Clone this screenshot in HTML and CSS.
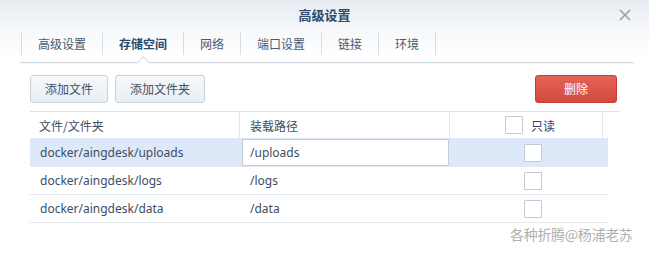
FILE: index.html
```html
<!DOCTYPE html>
<html lang="zh">
<head>
<meta charset="utf-8">
<link rel="stylesheet" href="styles.css">
</head>
<body>
<div class="window">
  <div class="titlebar">
    <div></div>
    <div class="title">高级设置</div>
    <div class="close-wrap">
      <svg class="close" width="12" height="12" viewBox="0 0 12 12"><path d="M1 1 L11 11 M11 1 L1 11" stroke="#9aa1a9" stroke-width="1.6" fill="none"/></svg>
    </div>
  </div>
  <div class="tabbar">
    <div class="tabs">
      <div class="tab">高级设置</div>
      <div class="tab active">存储空间</div>
      <div class="tab">网络</div>
      <div class="tab">端口设置</div>
      <div class="tab">链接</div>
      <div class="tab">环境</div>
    </div>
  </div>
  <div class="toolbar">
    <div class="btn">添加文件</div>
    <div class="btn">添加文件夹</div>
    <div class="spacer"></div>
    <div class="btn danger">删除</div>
  </div>
  <div class="grid">
    <div class="ghead">
      <div class="hcell c1">文件/文件夹</div>
      <div class="hcell c2">装载路径</div>
      <div class="hcell c3"><span class="cb"></span><span class="ro">只读</span></div>
      <div class="hcell c4"></div>
    </div>
    <div class="row selected">
      <div class="cell c1">docker/aingdesk/uploads</div>
      <div class="cell c2 edit"><div class="input">/uploads</div></div>
      <div class="cell c3b"><span class="cb"></span></div>
    </div>
    <div class="row">
      <div class="cell c1">docker/aingdesk/logs</div>
      <div class="cell c2">/logs</div>
      <div class="cell c3b"><span class="cb"></span></div>
    </div>
    <div class="row">
      <div class="cell c1">docker/aingdesk/data</div>
      <div class="cell c2">/data</div>
      <div class="cell c3b"><span class="cb"></span></div>
    </div>
  </div>
  <div class="watermark">各种折腾@杨浦老苏</div>
</div>
</body>
</html>
```
FILE: styles.css
```css
html, body {
  margin: 0;
  padding: 0;
  background: #fff;
}
body {
  width: 649px;
  height: 259px;
  overflow: hidden;
  font-family: "Noto Sans", "Noto Sans CJK SC", sans-serif;
  font-size: 12px;
  color: #3d4e63;
}
.window {
  position: relative;
  width: 649px;
  height: 259px;
  background: linear-gradient(#e8ecf1 0px, #f6f8fa 30px, #ffffff 56px);
}
.titlebar {
  height: 30px;
  display: grid;
  grid-template-columns: 1fr auto 1fr;
  align-items: center;
}
.title {
  font-family: "Noto Sans CJK SC", sans-serif;
  font-weight: bold;
  font-size: 13px;
  color: #2b4a6f;
  line-height: 30px;
}
.close-wrap {
  display: flex;
  justify-content: flex-end;
  padding-right: 18px;
}
.close { display: block; }
.tabbar {
  margin: 2px 15px 0 20px;
  padding-bottom: 7px;
  border-bottom: 1px solid #d3d9df;
  box-shadow: 0 1px 1px rgba(0,0,0,0.04);
}
.tabs {
  display: flex;
  margin-left: 1px;
}
.tab {
  font-family: "Noto Sans CJK SC", sans-serif;
  height: 23px;
  line-height: 23px;
  padding: 0 16px 0 16px;
  border-left: 1px solid #d6dde5;
  color: #4a5a6d;
  position: relative;
}
.tab:last-child {
  border-right: 1px solid #d6dde5;
}
.tab.active {
  font-weight: bold;
  color: #2b4a6f;
}
.tab.active::after {
  content: "";
  position: absolute;
  left: 50%;
  bottom: -12px;
  width: 8px;
  height: 8px;
  margin-left: -4px;
  background: #fff;
  border-left: 1px solid #d3d9df;
  border-top: 1px solid #d3d9df;
  transform: rotate(45deg);
}
.toolbar {
  display: flex;
  gap: 7px;
  margin: 12px 32px 0 30px;
  height: 28px;
}
.spacer { flex: 1; }
.btn {
  box-sizing: border-box;
  height: 28px;
  line-height: 26px;
  padding: 0 14px;
  border: 1px solid #c9d1db;
  border-radius: 3px;
  background: linear-gradient(#f6f8fa, #e9eef3);
  color: #3f5064;
  font-family: "Noto Sans CJK SC", sans-serif;
}
.btn:nth-child(2) { padding: 0 14px; }
.btn.danger {
  width: 82px;
  text-align: center;
  padding: 0;
  background: linear-gradient(#e46455, #d34a3e);
  border-color: #c53d34;
  color: #fff;
}
.grid {
  margin: 8px 0 0 30px;
  width: 590px;
}
.ghead {
  display: grid;
  grid-template-columns: 210px 210px 153px 17px;
  border-top: 1px solid #dde3ea;
  height: 26px;
}
.hcell {
  display: flex;
  align-items: center;
  padding-left: 9px;
  border-right: 1px solid #e1e7ee;
  font-family: "Noto Sans CJK SC", sans-serif;
  color: #3d4e63;
}
.hcell.c2 { padding-left: 10px; }
.hcell.c3 { padding-left: 55px; }
.hcell.c4 { border-right: none; }
.ro {
  margin-left: 8px;
  color: #2b4a6f;
}
.row {
  display: grid;
  grid-template-columns: 210px 210px 158px;
  width: 578px;
  height: 27px;
  border-top: 1px solid #e4e9ef;
}
.row:last-child { border-bottom: 1px solid #e4e9ef; }
.row.selected {
  background: #dde9f9;
  border-top-color: #dde9f9;
}
.cell {
  display: flex;
  align-items: center;
  padding-left: 10px;
  color: #3d4e63;
}
.cell.edit {
  padding-left: 2px;
}
.input {
  box-sizing: border-box;
  width: 207px;
  height: 27px;
  line-height: 25px;
  border: 1px solid #c4ccd6;
  background: #fff;
  padding-left: 7px;
}
.cell.c3b {
  padding-left: 74px;
}
.cb {
  display: inline-block;
  box-sizing: border-box;
  width: 18px;
  height: 18px;
  border: 1px solid #c3cad4;
  background: #fff;
  border-radius: 1px;
}
.watermark {
  position: absolute;
  left: 510px;
  top: 224px;
  font-family: "Noto Sans CJK SC", sans-serif;
  font-size: 14px;
  color: #b0b0b0;
  letter-spacing: -0.3px;
}
```
